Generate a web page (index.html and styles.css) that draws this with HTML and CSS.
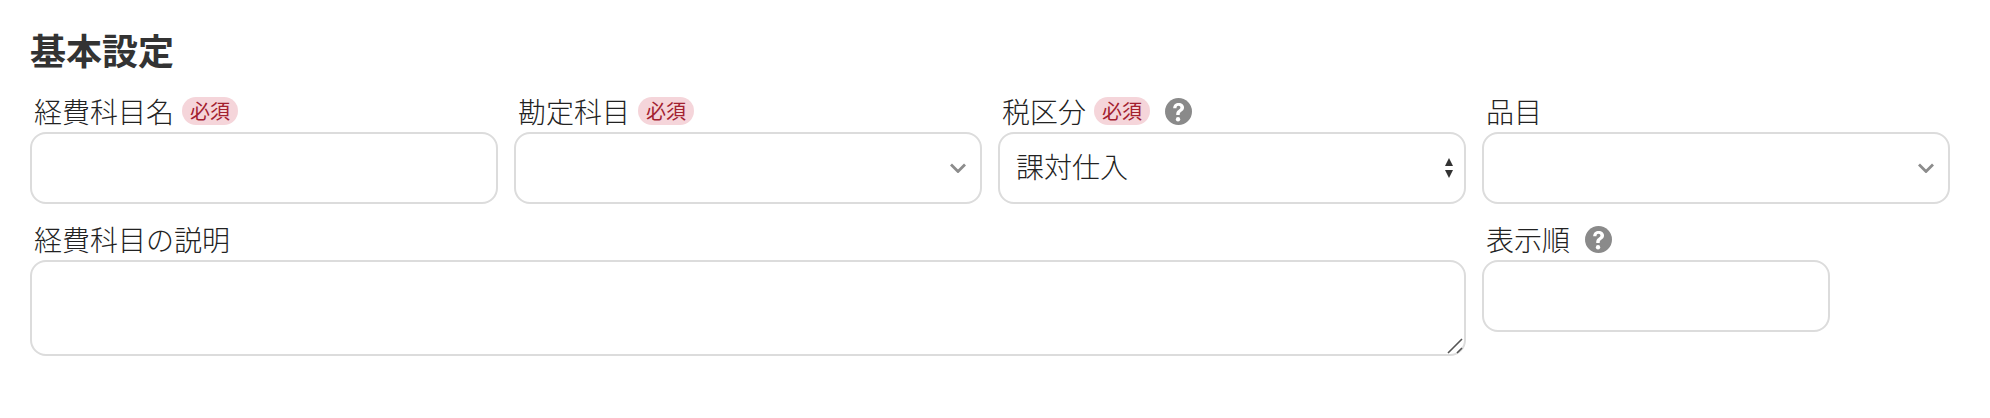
FILE: index.html
```html
<!DOCTYPE html>
<html lang="ja">
<head>
<meta charset="utf-8">
<title>基本設定</title>
<link rel="stylesheet" href="styles.css">
</head>
<body>
<main class="page">
  <h2 class="title">基本設定</h2>
  <form class="grid">
    <div class="field">
      <label class="label">経費科目名<span class="req">必須</span></label>
      <input class="control" type="text">
    </div>
    <div class="field">
      <label class="label">勘定科目<span class="req">必須</span></label>
      <div class="control-wrap">
        <div class="control"></div>
        <svg class="chevron" viewBox="0 0 16 10"><path d="M1 1.5 8 8.5 15 1.5" fill="none" stroke="#8c8c8c" stroke-width="2.8"/></svg>
      </div>
    </div>
    <div class="field">
      <label class="label">税区分<span class="req">必須</span>
        <svg class="help help-gap" viewBox="0 0 28 28"><circle cx="14" cy="14" r="14" fill="#8a8a8a"/><g transform="translate(14 14) scale(1.25) translate(-14 -13.6)"><path d="M9.6 10.8c.1-2.8 2-4.3 4.6-4.3 2.6 0 4.4 1.5 4.4 3.8 0 1.7-.9 2.6-2.1 3.4-1.1.8-1.5 1.2-1.5 2.4v.5h-2.9v-.7c0-1.8.6-2.7 1.9-3.6 1-.7 1.6-1.1 1.6-2 0-.9-.7-1.5-1.6-1.5-1 0-1.6.7-1.7 2z" fill="#fff"/><circle cx="13.6" cy="20" r="1.8" fill="#fff"/></g></svg>
      </label>
      <div class="control-wrap">
        <div class="control value">課対仕入</div>
        <svg class="updown" viewBox="0 0 8 20"><path d="M4 0 8 8H0zM4 20 0 12h8z" fill="#333"/></svg>
      </div>
    </div>
    <div class="field">
      <label class="label">品目</label>
      <div class="control-wrap">
        <div class="control"></div>
        <svg class="chevron" viewBox="0 0 16 10"><path d="M1 1.5 8 8.5 15 1.5" fill="none" stroke="#8c8c8c" stroke-width="2.8"/></svg>
      </div>
    </div>
    <div class="field wide">
      <label class="label">経費科目の説明</label>
      <div class="control-wrap">
        <textarea class="control area"></textarea>
        <svg class="grip" viewBox="0 0 16 16"><path d="M1 15 15 1M10 15 15 10" fill="none" stroke="#555" stroke-width="1.6"/></svg>
      </div>
    </div>
    <div class="field">
      <label class="label">表示順
        <svg class="help help-gap2" viewBox="0 0 28 28"><circle cx="14" cy="14" r="14" fill="#8a8a8a"/><g transform="translate(14 14) scale(1.25) translate(-14 -13.6)"><path d="M9.6 10.8c.1-2.8 2-4.3 4.6-4.3 2.6 0 4.4 1.5 4.4 3.8 0 1.7-.9 2.6-2.1 3.4-1.1.8-1.5 1.2-1.5 2.4v.5h-2.9v-.7c0-1.8.6-2.7 1.9-3.6 1-.7 1.6-1.1 1.6-2 0-.9-.7-1.5-1.6-1.5-1 0-1.6.7-1.7 2z" fill="#fff"/><circle cx="13.6" cy="20" r="1.8" fill="#fff"/></g></svg>
      </label>
      <input class="control short" type="text">
    </div>
  </form>
</main>
</body>
</html>
```
FILE: styles.css
```css
* { box-sizing: border-box; }
html, body { margin: 0; background: #fff; }
body {
  font-family: "Noto Sans CJK JP", "Liberation Sans", sans-serif;
  font-weight: 300;
  color: #222;
  height: 418px;
  overflow: hidden;
}
.page { padding: 27px 40px 0 30px; }
.title {
  margin: 0 0 20px;
  font-size: 36px;
  line-height: 44px;
  font-weight: 700;
  color: #333;
}
.grid {
  display: grid;
  grid-template-columns: repeat(4, 468px);
  column-gap: 16px;
  row-gap: 15px;
}
.wide { grid-column: span 3; }
.label {
  display: flex;
  align-items: center;
  height: 40px;
  padding: 0 0 0 4px;
  margin-bottom: 1px;
  font-size: 28px;
  line-height: 40px;
  color: #222;
}
.req {
  display: inline-block;
  width: 56px;
  height: 28px;
  margin-left: 8px;
  border-radius: 14px;
  background: #f5d5da;
  color: #a3212f;
  font-size: 20px;
  font-weight: 400;
  line-height: 28px;
  text-align: center;
}
.help { width: 27px; height: 27px; flex: none; }
.help-gap { margin-left: 15px; }
.help-gap2 { margin-left: 15px; }
.field { min-width: 0; }
.control-wrap { position: relative; }
.control {
  display: block;
  width: 100%;
  height: 72px;
  margin: 0;
  padding: 0 16px;
  border: 2px solid #dcdcdc;
  border-radius: 16px;
  background: #fff;
  font: inherit;
  font-size: 28px;
  line-height: 64px;
  color: #222;
  outline: none;
}
.area { height: 96px; resize: none; }
.short { width: 348px; }
.chevron {
  position: absolute;
  right: 16px;
  top: 31px;
  width: 16px;
  height: 10px;
}
.updown {
  position: absolute;
  right: 13px;
  top: 26px;
  width: 8px;
  height: 20px;
}
.grip {
  position: absolute;
  right: 3px;
  bottom: 2px;
  width: 16px;
  height: 16px;
}
```
